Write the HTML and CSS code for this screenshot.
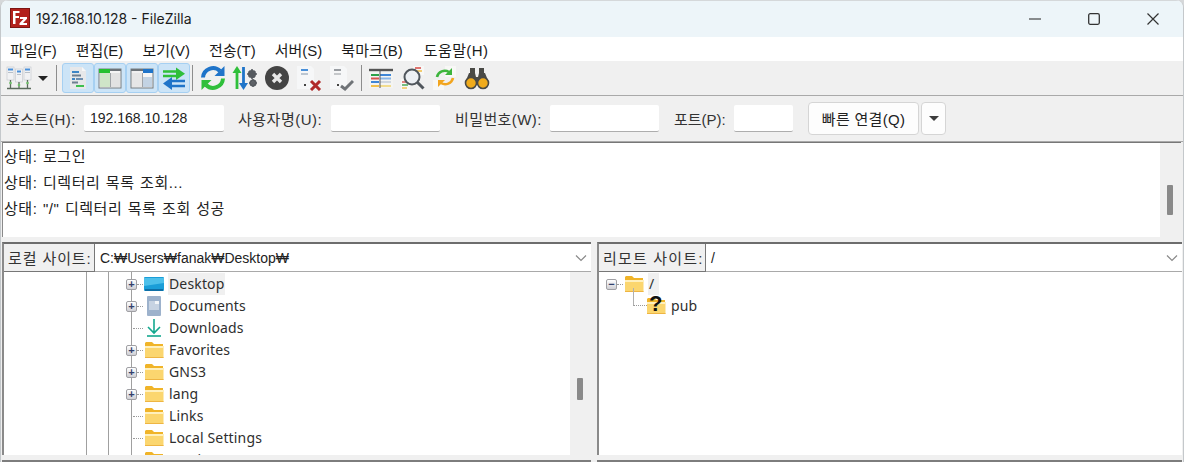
FILE: index.html
```html
<!DOCTYPE html>
<html lang="ko">
<head>
<meta charset="utf-8">
<title>192.168.10.128 - FileZilla</title>
<link rel="stylesheet" href="styles.css">
</head>
<body>
<div class="window">
  <header class="titlebar">
    <svg class="app-icon" width="20" height="20" viewBox="0 0 20 20"><rect width="20" height="20" fill="#fff"/><rect x="0.5" y="0.5" width="19" height="19" fill="#b2211c" stroke="#7d1512"/><path d="M3 3h6.500v2H5.500v3H9v2H5.500v6H3z" fill="#fff"/><path d="M10 9h7v1.800L13 15h4v2h-7.500v-1.800l4-4.200H10z" fill="#fff"/></svg>
    <span class="title">192.168.10.128 - FileZilla</span>
    <div class="win-controls">
      <svg width="12" height="12" viewBox="0 0 12 12"><path d="M0 6h12" stroke="#222" stroke-width="1.200"/></svg>
      <svg width="12" height="12" viewBox="0 0 12 12"><rect x="0.700" y="0.700" width="10.600" height="10.600" rx="1.500" fill="none" stroke="#333" stroke-width="1.300"/></svg>
      <svg width="12" height="12" viewBox="0 0 12 12"><path d="M0.500 0.500l11 11M11.500 0.500l-11 11" stroke="#333" stroke-width="1.200"/></svg>
    </div>
  </header>
  <nav class="menubar">
    <span>파일(F)</span><span>편집(E)</span><span>보기(V)</span><span>전송(T)</span><span>서버(S)</span><span>북마크(B)</span><span class="m-help">도움말(H)</span>
  </nav>
  <div class="toolbar">
    <span class="tool tool-wide">
      <svg width="26" height="26" viewBox="0 0 26 26"><g fill="#f1f2f4" stroke="#c3c7cc" stroke-width=".6"><rect x="1" y="2" width="7" height="13"/><rect x="9.500" y="4" width="7" height="13"/><rect x="18" y="2" width="7" height="13"/></g><path d="M2 4.500h5M11 6.500h4M19 4.500h5" stroke="#4a90d9" stroke-width="2"/><path d="M2 7.500h5M11 9.500h4M19 7.500h5" stroke="#b9c0c8"/><path d="M1 23.500h24M4.500 15v8M13 17v6M21.500 15v8" stroke="#5b6b5d" stroke-width="1.300" fill="none"/><circle cx="4.500" cy="18" r="1.300" fill="#6fbf6a"/><circle cx="13" cy="20" r="1.300" fill="#6fbf6a"/><circle cx="21.500" cy="18" r="1.300" fill="#6fbf6a"/></svg>
      <i class="caret"></i>
    </span>
    <i class="sep sep-a"></i>
    <span class="tool on">
      <svg width="22" height="24" viewBox="0 0 22 24"><path d="M3 1h12l4 4v18H3z" fill="#e7e8ea"/><path d="M15 1l4 4h-4z" fill="#f7f7f8"/><path d="M5 6h7" stroke="#3f86c6" stroke-width="2"/><path d="M5 9.500h9" stroke="#6f7f90" stroke-width="2"/><path d="M5 13h3" stroke="#3f86c6" stroke-width="2"/><path d="M9 13h7" stroke="#6f8fb0" stroke-width="2"/><path d="M5 16.500h6" stroke="#6f7f90" stroke-width="2"/><path d="M9 20h8" stroke="#3fbf4f" stroke-width="2"/></svg>
    </span>
    <span class="tool on">
      <svg width="24" height="22" viewBox="0 0 24 22"><rect x="1" y="2" width="22" height="19" fill="#f4f4f4" stroke="#777c80"/><rect x="1" y="2" width="11" height="4" fill="#25c02f"/><rect x="12" y="2" width="11" height="2" fill="#6d7378"/><rect x="2" y="6" width="10" height="14" fill="#cfe5c8"/><rect x="13" y="6" width="9" height="14" fill="#e2e2e2"/><path d="M12.500 6v14" stroke="#a0a4a8"/></svg>
    </span>
    <span class="tool on">
      <svg width="24" height="22" viewBox="0 0 24 22"><rect x="1" y="2" width="22" height="19" fill="#f0f0f0" stroke="#777c80"/><rect x="1" y="2" width="12" height="2" fill="#6d7378"/><rect x="13" y="2" width="10" height="4" fill="#1f74c9"/><rect x="2" y="6" width="10" height="14" fill="#e6e6e6"/><rect x="13" y="6" width="9" height="4" fill="#f6f6f6"/><rect x="13" y="10" width="9" height="10" fill="#c3d3e3"/><path d="M12.500 6v14" stroke="#a0a4a8"/></svg>
    </span>
    <span class="tool on">
      <svg width="24" height="24" viewBox="0 0 24 24"><path d="M1 5.500h16M1 10h16" stroke="#2fbf3a" stroke-width="2.400"/><path d="M14 1.500l9 6.300-9 6.200z" fill="#2fbf3a"/><path d="M7 15h16M7 20h16" stroke="#1f74c9" stroke-width="2.400"/><path d="M10 11L1 17.500 10 24z" fill="#1f74c9"/></svg>
    </span>
    <i class="sep sep-b"></i>
    <span class="tool">
      <svg width="26" height="26" viewBox="0 0 26 26"><path d="M3 12.500a10 10 0 0 1 17-6.500" fill="none" stroke="#1f74c9" stroke-width="4"/><path d="M24.500 1v10h-10z" fill="#1f74c9"/><path d="M23 13.500a10 10 0 0 1-17 6.500" fill="none" stroke="#2fbf3a" stroke-width="4"/><path d="M1.500 25V15h10z" fill="#2fbf3a"/></svg>
    </span>
    <span class="tool">
      <svg width="26" height="26" viewBox="0 0 26 26"><path d="M5 7v17" stroke="#2fbf3a" stroke-width="2.800"/><path d="M5 1l4.500 7h-9z" fill="#2fbf3a"/><path d="M11.500 2v17" stroke="#1f74c9" stroke-width="2.800"/><path d="M11.500 25L7 18h9z" fill="#1f74c9"/><g fill="none" stroke="#555a5f" stroke-width="2.200"><circle cx="20" cy="9" r="3"/><circle cx="21" cy="18" r="2.500"/></g><g stroke="#555a5f" stroke-width="1.600"><path d="M20 4v10M15 9h10M17 6l6 6M23 6l-6 6M21 14v8M17 18h8"/></g></svg>
    </span>
    <span class="tool">
      <svg width="26" height="26" viewBox="0 0 26 26"><circle cx="13" cy="13" r="12" fill="#444"/><path d="M9 9l8 8M17 9l-8 8" stroke="#e8e8e8" stroke-width="3.400"/></svg>
    </span>
    <span class="tool dim">
      <svg width="26" height="26" viewBox="0 0 26 26"><path d="M1 1h14l3 3v20H1z" fill="#f6f7f8"/><path d="M5 5h7" stroke="#4a90d9" stroke-width="2"/><path d="M5 9h7" stroke="#a8b6c4" stroke-width="1.500"/><rect x="8" y="19" width="2" height="2" fill="#444"/><path d="M15 16l9 9M24 16l-9 9" stroke="#b12a2a" stroke-width="3"/></svg>
    </span>
    <span class="tool dim">
      <svg width="26" height="26" viewBox="0 0 26 26"><path d="M2 1h14l3 3v20H2z" fill="#f6f7f8"/><path d="M6 5h7" stroke="#9a9ea3" stroke-width="2"/><path d="M6 9h7" stroke="#b5b8bc" stroke-width="1.500"/><rect x="9" y="19" width="2" height="2" fill="#444"/><path d="M13 21l4 3 8-8" fill="none" stroke="#6f7377" stroke-width="3"/></svg>
    </span>
    <i class="sep sep-c"></i>
    <span class="tool">
      <svg width="26" height="24" viewBox="0 0 26 24"><rect x="1" y="3" width="24" height="19" fill="#f4f4f2"/><path d="M1 4h24" stroke="#555" stroke-width="2.400"/><path d="M3 9h8" stroke="#2fa24a" stroke-width="2"/><path d="M12 9h11" stroke="#3f86d6" stroke-width="2"/><path d="M3 12.500h8" stroke="#d9534f" stroke-width="2"/><path d="M12 12.500h11" stroke="#8ab6e6" stroke-width="2"/><path d="M3 16h8" stroke="#3f86d6" stroke-width="2"/><path d="M12 16h11" stroke="#cfd6de" stroke-width="2"/><path d="M3 20h8" stroke="#f2c14e" stroke-width="2"/><path d="M12 20h11" stroke="#f2dc8e" stroke-width="2"/><path d="M12 4v18" stroke="#555"/></svg>
    </span>
    <span class="tool">
      <svg width="26" height="26" viewBox="0 0 26 26"><rect x="13" y="1" width="11" height="9" fill="#f8f8f6"/><path d="M15 3h6" stroke="#d9534f" stroke-width="1.600"/><path d="M15 6h7" stroke="#f2c14e" stroke-width="1.600"/><rect x="1" y="14" width="9" height="11" fill="#f8f8f6"/><path d="M2 17h5" stroke="#d9534f" stroke-width="1.400"/><path d="M2 20h6" stroke="#3fa34d" stroke-width="1.400"/><path d="M2 23h5" stroke="#f2c14e" stroke-width="1.400"/><circle cx="12" cy="12" r="7.500" fill="#e9eef3" fill-opacity=".7" stroke="#50565c" stroke-width="2"/><path d="M17.500 17.500l6 6" stroke="#50565c" stroke-width="3"/></svg>
    </span>
    <span class="tool">
      <svg width="26" height="26" viewBox="0 0 26 26"><rect x="13" y="1" width="11" height="11" fill="#f8f8f6"/><rect x="1" y="15" width="11" height="10" fill="#f8f8f6"/><path d="M5 12a8 8 0 0 1 12-5" fill="none" stroke="#3db53d" stroke-width="2.600"/><path d="M20 3v7h-7z" fill="#3db53d"/><path d="M21 13a8 8 0 0 1-12 5" fill="none" stroke="#f2a51f" stroke-width="2.600"/><path d="M6 22v-7h7z" fill="#f2a51f"/></svg>
    </span>
    <span class="tool">
      <svg width="26" height="24" viewBox="0 0 26 24"><path d="M6 2h5v6H6zM15 2h5v6h-5z" fill="#4a4a46"/><path d="M5 7h6l1 4h2l1-4h6l4 10H1z" fill="#4a4a46"/><circle cx="7" cy="17" r="5.500" fill="#f0ab1c" stroke="#4a4a46" stroke-width="1.600"/><circle cx="19" cy="17" r="5.500" fill="#f0ab1c" stroke="#4a4a46" stroke-width="1.600"/></svg>
    </span>
  </div>
  <form class="quickbar">
    <label class="q-label q-host">호스트(H):</label><input class="q-input q-input-host" value="192.168.10.128">
    <label class="q-label q-user">사용자명(U):</label><input class="q-input q-input-user">
    <label class="q-label q-pass">비밀번호(W):</label><input class="q-input q-input-pass">
    <label class="q-label q-port">포트(P):</label><input class="q-input q-input-port">
    <span class="q-btn q-connect">빠른 연결(Q)</span>
    <span class="q-btn q-drop"><i class="caret"></i></span>
  </form>
  <section class="log">
    <div class="log-lines">
      <p>상태: 로그인</p>
      <p>상태: 디렉터리 목록 조회...</p>
      <p>상태: "/" 디렉터리 목록 조회 성공</p>
    </div>
    <div class="scroll"><i class="thumb thumb-log"></i></div>
  </section>
  <main class="panes">
    <section class="pane pane-local">
      <div class="site-bar">
        <span class="site-label label-local">로컬 사이트:</span>
        <span class="site-path">C:₩Users₩fanak₩Desktop₩</span>
        <svg class="chev" width="12" height="8" viewBox="0 0 12 8"><path d="M1 1.500l5 5 5-5" fill="none" stroke="#8a8a8a" stroke-width="1.200"/></svg>
      </div>
      <div class="tree-wrap">
        <div class="tree tree-local">
          <i class="guide guide-a"></i><i class="guide guide-b"></i><i class="guide guide-c"></i>
          <div class="node"><i class="exp">+</i><i class="dots"></i>
            <svg class="ico" width="22" height="18" viewBox="0 0 22 18"><rect x="1" y="2" width="20" height="14" rx="1" fill="#1a9ed8"/><path d="M1 3h20v5L1 11z" fill="#4dc0ea"/><path d="M2 15h18" stroke="#0b5f96" stroke-width="1.500"/></svg>
            <span class="name sel">Desktop</span></div>
          <div class="node"><i class="exp">+</i><i class="dots"></i>
            <svg class="ico" width="22" height="20" viewBox="0 0 22 20"><rect x="4" y="0" width="14" height="20" rx="1" fill="#9db2cc"/><rect x="6" y="5" width="10" height="9" fill="#c7d3e2"/><rect x="12" y="5" width="4" height="3" fill="#f2f5f8"/></svg>
            <span class="name">Documents</span></div>
          <div class="node"><i class="dots long"></i>
            <svg class="ico" width="22" height="20" viewBox="0 0 22 20"><path d="M11 1v13M5 9l6 6 6-6" fill="none" stroke="#14a88f" stroke-width="1.600"/><path d="M4 18h14" stroke="#14a88f" stroke-width="1.600"/></svg>
            <span class="name">Downloads</span></div>
          <div class="node"><i class="exp">+</i><i class="dots"></i><svg class="ico" width="22" height="18" viewBox="0 0 22 18"><use href="#folder"/></svg><span class="name">Favorites</span></div>
          <div class="node"><i class="exp">+</i><i class="dots"></i><svg class="ico" width="22" height="18" viewBox="0 0 22 18"><use href="#folder"/></svg><span class="name">GNS3</span></div>
          <div class="node"><i class="exp">+</i><i class="dots"></i><svg class="ico" width="22" height="18" viewBox="0 0 22 18"><use href="#folder"/></svg><span class="name">lang</span></div>
          <div class="node"><i class="dots long"></i><svg class="ico" width="22" height="18" viewBox="0 0 22 18"><use href="#folder"/></svg><span class="name">Links</span></div>
          <div class="node"><i class="dots long"></i><svg class="ico" width="22" height="18" viewBox="0 0 22 18"><use href="#folder"/></svg><span class="name">Local Settings</span></div>
          <div class="node"><i class="dots long"></i><svg class="ico" width="22" height="18" viewBox="0 0 22 18"><use href="#folder"/></svg><span class="name">Music</span></div>
        </div>
        <div class="scroll"><i class="thumb thumb-tree"></i></div>
      </div>
    </section>
    <section class="pane pane-remote">
      <div class="site-bar">
        <span class="site-label label-remote">리모트 사이트:</span>
        <span class="site-path">/</span>
        <svg class="chev" width="12" height="8" viewBox="0 0 12 8"><path d="M1 1.500l5 5 5-5" fill="none" stroke="#8a8a8a" stroke-width="1.200"/></svg>
      </div>
      <div class="tree-wrap">
        <div class="tree tree-remote">
          <div class="node"><i class="exp">−</i><i class="dots"></i><svg class="ico" width="22" height="18" viewBox="0 0 22 18"><use href="#folder"/></svg><span class="name sel">/</span></div>
          <div class="node child"><i class="elbow"></i>
            <span class="q-folder"><svg class="ico" width="22" height="18" viewBox="0 0 22 18"><use href="#folder"/></svg><b>?</b></span>
            <span class="name">pub</span></div>
        </div>
      </div>
    </section>
  </main>
  <div class="lower"><i class="lower-l"></i><i class="lower-r"></i></div>
</div>
<svg class="defs" width="0" height="0"><defs><g id="folder"><path d="M3 1h6l2 2h9v3H2V2z" fill="#f0b429"/><path d="M2 5h18.500v12H2z" fill="#fbd66f"/><path d="M2 5h18.500v2H2z" fill="#fff0bd"/><path d="M2 16h18.500v1H2z" fill="#eeb543"/></g></defs></svg>
</body>
</html>
```
FILE: styles.css
```css
* { box-sizing: border-box; }
html, body { margin: 0; padding: 0; width: 1184px; height: 462px; overflow: hidden; background: #d6d8da; }
body { font-family: "Liberation Sans", "Noto Sans CJK KR", sans-serif; font-size: 14px; color: #222; }
i { display: block; font-style: normal; }
p { margin: 0; }
.window { width: 1184px; height: 462px; display: flex; flex-direction: column; position: relative; overflow: hidden; background: #f0f0f0; border-left: 1px solid #c4c8cb; border-right: 1px solid #c4c8cb; border-radius: 8px 8px 0 0; }
.defs { position: absolute; }

.titlebar { height: 37px; flex: none; display: flex; align-items: center; background: #edf5f9; padding-left: 9px; border-top: 1px solid #d5d8da; }
.app-icon { flex: none; margin-top: -2px; }
.title { margin-left: 6px; font-family: "Inter", "Liberation Sans", sans-serif; font-size: 14px; color: #1c1c1c; margin-top: -2px; }
.win-controls { margin-left: auto; display: flex; gap: 47px; align-items: center; padding-right: 24px; margin-top: -1px; }

.menubar { height: 24px; flex: none; display: flex; align-items: center; background: #fff; padding-left: 9px; font-size: 15px; gap: 19px; }
.menubar span { color: #1b1b1b; }
.menubar .m-help { margin-left: 2px; letter-spacing: .4px; }

.toolbar { height: 35px; flex: none; display: flex; align-items: center; background: #f0f0f0; padding-left: 5px; border-bottom: 1px solid #a9a9a9; }
.tool { width: 32px; height: 30px; display: flex; align-items: center; justify-content: center; flex: none; }
.tool svg { display: block; }
.tool.on { background: #cce4f7; border: 1px solid #a6d0f2; border-radius: 3px; }
.tool-wide { width: 47px; justify-content: flex-start; gap: 6px; }
.caret { width: 0; height: 0; border-left: 5px solid transparent; border-right: 5px solid transparent; border-top: 5px solid #222; }
.sep { width: 1px; height: 26px; background: #8d8d8d; flex: none; }
.sep-a { margin: 0 5px 0 3px; }
.sep-b { margin: 0 4px 0 2px; }
.sep-c { margin: 0 3px 0 4px; }

.quickbar { height: 46px; flex: none; display: flex; align-items: center; background: #f0f0f0; padding-left: 5px; font-size: 15px; border-bottom: 1px solid #a9a9a9; }
.q-label { color: #333; flex: none; white-space: nowrap; letter-spacing: .5px; }
.q-host { width: 70px; }
.q-user { width: 85px; margin-left: 14px; }
.q-pass { width: 87px; margin-left: 15px; letter-spacing: .4px; }
.q-port { width: 52px; margin-left: 15px; letter-spacing: 0; }
.q-input { height: 27px; border: 0; border-bottom: 1px solid #adadad; background: #fff; padding: 0 6px; font: 14px "Liberation Sans", sans-serif; color: #222; flex: none; border-radius: 2px; margin-left: 8px; }
.q-input-host { width: 140px; }
.q-input-user { width: 109px; }
.q-input-pass { width: 109px; }
.q-input-port { width: 59px; }
.q-btn { height: 33px; background: #fdfdfd; border: 1px solid #d5d5d5; border-radius: 4px; display: flex; align-items: center; justify-content: center; flex: none; color: #222; letter-spacing: .3px; }
.q-connect { width: 111px; margin-left: 15px; }
.q-drop { width: 25px; margin-left: 2px; }
.q-drop .caret { border-top-color: #3c3c3c; }

.log { height: 95px; flex: none; display: flex; background: #fff; border-top: 1px solid #777; border-left: 1px solid #8a8a8a; margin: 0 2px 0 1px; }
.log-lines { flex: 1; padding: 1px 0 0 1px; font-size: 15px; letter-spacing: .55px; word-spacing: .8px; }
.log-lines p { height: 26px; line-height: 25px; color: #222; }
.scroll { width: 21px; flex: none; background: #f0f0f0; position: relative; }
.thumb { position: absolute; width: 6px; background: #8a8a8a; border-radius: 1px; left: 7px; }
.thumb-log { top: 42px; height: 30px; }
.thumb-tree { top: 106px; height: 22px; }

.panes { flex: 1; min-height: 0; display: flex; gap: 6px; padding: 5px 1px 0 1px; }
.pane { display: flex; flex-direction: column; min-width: 0; background: #fff; border-top: 2px solid #6d6d6d; border-left: 2px solid #8a8a8a; }
.pane-local { width: 589px; }
.pane-remote { flex: 1; }
.site-bar { height: 28px; flex: none; display: flex; align-items: center; border-bottom: 1px solid #a9a9a9; background: #fff; position: relative; }
.site-label { height: 28px; display: flex; align-items: center; padding: 0 0 0 4px; background: #f0f0f0; border-right: 1px solid #777; border-bottom: 1px solid #777; font-size: 15px; letter-spacing: .9px; color: #333; flex: none; white-space: nowrap; }
.label-local { width: 91px; }
.label-remote { width: 107px; letter-spacing: 1.2px; }
.site-path { margin-left: 5px; font-size: 14px; flex: 1; color: #222; white-space: nowrap; }
.chev { margin-right: 4px; flex: none; }

.lower { height: 7px; flex: none; display: flex; gap: 6px; padding: 5px 1px 0 1px; }
.lower i { height: 2px; background: #7d7d7d; }
.lower-l { width: 589px; }
.lower-r { flex: 1; }

.tree-wrap { flex: 1; min-height: 0; display: flex; overflow: hidden; }
.tree { flex: 1; position: relative; overflow: hidden; }
.tree-local { padding: 1px 0 0 122px; }
.tree-remote { padding: 1px 0 0 7px; }
.guide { position: absolute; top: 0; bottom: 0; width: 1px; background: #a0a0a0; }
.guide-a { left: 82px; }
.guide-b { left: 104px; }
.guide-c { left: 127px; }
.node { height: 22px; display: flex; align-items: center; font-family: "Noto Sans", "Liberation Sans", sans-serif; font-size: 14px; color: #333; position: relative; }
.exp { width: 11px; height: 11px; flex: none; background: linear-gradient(#fff, #cfcfd4); border: 1px solid #a0a0a4; border-radius: 2px; font: 700 11px/9px "Liberation Sans", sans-serif; color: #33406b; text-align: center; }
.dots { width: 6px; height: 1px; flex: none; border-top: 1px dotted #999; }
.dots.long { width: 10px; margin-left: 7px; }
.ico { flex: none; display: block; }
.name { margin-left: 3px; padding: 0 1px; height: 22px; line-height: 22px; color: #2e2e2e; letter-spacing: .15px; }
.name.sel { background: #f0f0f0; }
.tree-remote .name.sel { padding: 0 5px 0 1px; margin-left: 3px; }
.child { padding-left: 26px; }
.elbow { position: absolute; left: 27px; top: -7px; width: 14px; height: 18px; border-left: 1px solid #b0b0b0; border-bottom: 1px dotted #999; }
.q-folder { position: relative; margin-left: 13px; display: block; flex: none; }
.q-folder b { position: absolute; left: 4px; top: -4px; font: 700 22px/22px "Liberation Sans", sans-serif; color: #111; }
.child .name { margin-left: 3px; }
```
